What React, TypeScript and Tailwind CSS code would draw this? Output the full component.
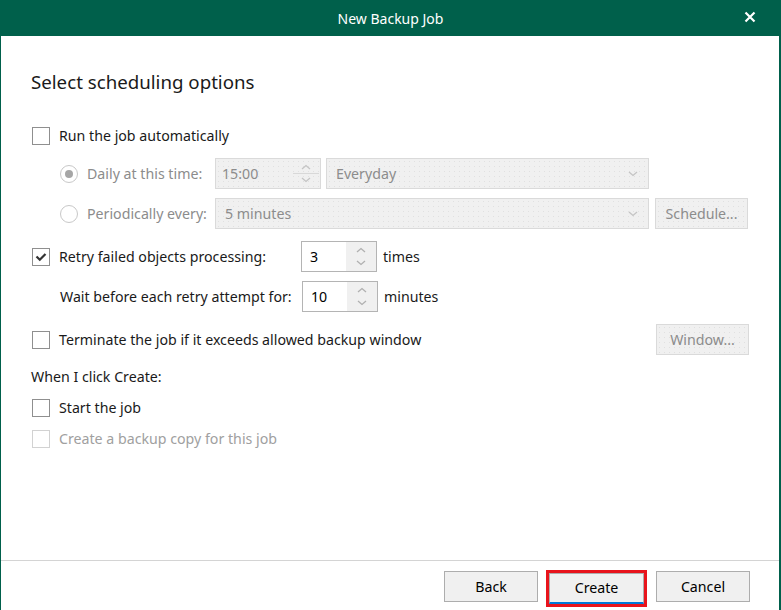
import React from 'react';

const font = { fontFamily: '"Noto Sans", "Open Sans", sans-serif' };

const Check: React.FC<{ checked?: boolean; disabled?: boolean }> = ({ checked, disabled }) => (
  <div
    className={`w-[18px] h-[18px] shrink-0 border bg-white flex items-center justify-center ${
      disabled ? 'border-[#d2d2d2]' : 'border-[#8f8f8f]'
    }`}
  >
    {checked && (
      <svg width="14" height="14" viewBox="0 0 14 14">
        <path d="M2.5 6.5 L5.8 9.8 L11.5 4" fill="none" stroke="#333" strokeWidth="2.2" />
      </svg>
    )}
  </div>
);

const Radio: React.FC<{ checked?: boolean }> = ({ checked }) => (
  <div className="w-[18px] h-[18px] shrink-0 rounded-full border border-[#c8c8c8] bg-white flex items-center justify-center">
    {checked && <div className="w-[8px] h-[8px] rounded-full bg-[#a6a6a6]" />}
  </div>
);

const Chevron: React.FC<{ up?: boolean; color?: string }> = ({ up, color = '#9a9a9a' }) => (
  <svg width="10" height="6" viewBox="0 0 10 6">
    <path d={up ? 'M1 5 L5 1.5 L9 5' : 'M1 1 L5 4.5 L9 1'} fill="none" stroke={color} strokeWidth="1.3" />
  </svg>
);

const disabledBg =
  'bg-[#f0f0f0] bg-[radial-gradient(#e0e0e0_0.6px,transparent_0.6px)] bg-[length:5px_5px]';

const Spinner: React.FC<{ value: string }> = ({ value }) => (
  <div className="w-[76px] h-[31px] border border-[#b4b4b4] bg-white flex">
    <div className="flex-1 flex items-center pl-[8px] text-black">{value}</div>
    <div className="w-[30px] bg-[#f0f0f0] flex flex-col items-center justify-center gap-[7px]">
      <Chevron up color="#b0b0b0" />
      <Chevron color="#b0b0b0" />
    </div>
  </div>
);

const DisabledButton: React.FC<{ label: string }> = ({ label }) => (
  <div
    className={`w-[93px] h-[31px] border border-[#dadada] ${disabledBg} flex items-center justify-center text-[#8c8c8c]`}
  >
    {label}
  </div>
);

export default function App() {
  return (
    <div className="w-[781px] h-[610px] bg-white flex flex-col overflow-hidden text-[14.2px]" style={font}>
      <div className="h-[36px] shrink-0 bg-[#00604b] flex items-center relative">
        <div className="flex-1 text-center text-white text-[14px]">New Backup Job</div>
        <svg className="absolute left-[744px] top-[11px]" width="12" height="12" viewBox="0 0 12 12">
          <path d="M1.5 1.5 L10.5 10.5 M10.5 1.5 L1.5 10.5" stroke="#fff" strokeWidth="2.2" />
        </svg>
      </div>

      <div className="flex-1 flex flex-col border-l border-l-[#00604b] border-r-2 border-r-[#00604b]">
        <div className="flex-1 flex flex-col pl-[30px] pr-[30px] text-[#1a1a1a]">
          <h1 className="mt-[32px] h-[28px] flex items-center text-[18.7px] text-[#1a1a1a]">
            Select scheduling options
          </h1>

          <div className="mt-[30px] h-[20px] flex items-center gap-[9px] pl-[1px]">
            <Check />
            <span>Run the job automatically</span>
          </div>

          <div className="mt-[12px] h-[31px] flex items-center pl-[29px] text-[#8c8c8c]">
            <Radio checked />
            <span className="ml-[9px] w-[128px]">Daily at this time:</span>
            <div className={`w-[106px] h-[31px] border border-[#dadada] ${disabledBg} flex`}>
              <div className="flex-1 flex items-center pl-[6px]">15:00</div>
              <div className="w-[28px] flex flex-col items-center justify-center gap-[3px]">
                <Chevron up color="#c4c4c4" />
                <div className="w-[26px] h-px bg-[#d8d8d8]" />
                <Chevron color="#c4c4c4" />
              </div>
            </div>
            <div
              className={`ml-[5px] w-[323px] h-[31px] border border-[#dadada] ${disabledBg} flex items-center justify-between pl-[9px] pr-[10px]`}
            >
              <span>Everyday</span>
              <Chevron color="#c4c4c4" />
            </div>
          </div>

          <div className="mt-[9px] h-[31px] flex items-center pl-[29px] text-[#8c8c8c]">
            <Radio />
            <span className="ml-[9px] w-[128px]">Periodically every:</span>
            <div
              className={`w-[434px] h-[31px] border border-[#dadada] ${disabledBg} flex items-center justify-between pl-[9px] pr-[10px]`}
            >
              <span>5 minutes</span>
              <Chevron color="#c4c4c4" />
            </div>
            <div className="ml-[6px]">
              <DisabledButton label="Schedule..." />
            </div>
          </div>

          <div className="mt-[12px] h-[31px] flex items-center pl-[1px]">
            <Check checked />
            <span className="ml-[9px] w-[242px]">Retry failed objects processing:</span>
            <Spinner value="3" />
            <span className="ml-[6px]">times</span>
          </div>

          <div className="mt-[9px] h-[31px] flex items-center pl-[29px]">
            <span className="w-[242px]">Wait before each retry attempt for:</span>
            <Spinner value="10" />
            <span className="ml-[6px]">minutes</span>
          </div>

          <div className="mt-[12px] h-[31px] flex items-center pl-[1px]">
            <Check />
            <span className="ml-[9px] flex-1">Terminate the job if it exceeds allowed backup window</span>
            <DisabledButton label="Window..." />
          </div>

          <div className="mt-[12px] h-[20px] flex items-center">When I click Create:</div>

          <div className="mt-[11px] h-[20px] flex items-center gap-[9px] pl-[1px]">
            <Check />
            <span>Start the job</span>
          </div>

          <div className="mt-[11px] h-[20px] flex items-center gap-[9px] pl-[1px] text-[#a0a0a0]">
            <Check disabled />
            <span>Create a backup copy for this job</span>
          </div>
        </div>

        <div className="h-px bg-[#d4d4d4] mb-[9px]" />
        <div className="h-[40px] flex items-start justify-end pr-[29px] text-black">
          <button className="mt-[1px] w-[94px] h-[31px] border border-[#adadad] bg-[#f0f0f0]">Back</button>
          <div className="ml-[8px] border-[3px] border-[#e8141c]">
            <button className="w-[95px] h-[31px] border border-[#adadad] border-b-2 border-b-[#0078d7] bg-[#f0f0f0]">
              Create
            </button>
          </div>
          <button className="mt-[1px] ml-[9px] w-[94px] h-[31px] border border-[#adadad] bg-[#f0f0f0]">Cancel</button>
        </div>
      </div>
    </div>
  );
}
